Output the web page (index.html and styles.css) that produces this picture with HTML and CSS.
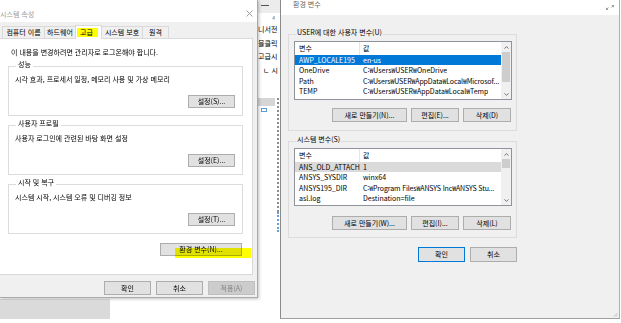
FILE: index.html
```html
<!DOCTYPE html>
<html lang="ko">
<head>
<meta charset="utf-8">
<link rel="stylesheet" href="styles.css">
</head>
<body>
<div class="screen">
  <div class="left-col">
    <div class="ldlg">
      <div class="ltitle">
        <span class="ttext">시스템 속성</span>
        <svg class="close" width="7" height="7" viewBox="0 0 7 7"><path d="M0.5 0.5 L6.5 6.5 M6.5 0.5 L0.5 6.5" stroke="#8a8a8a" stroke-width="0.8" fill="none"/></svg>
      </div>
      <div class="tabs">
        <div class="tab t1">컴퓨터 이름</div>
        <div class="tab t2">하드웨어</div>
        <div class="tab sel"><span class="hl">고급</span></div>
        <div class="tab t4">시스템 보호</div>
        <div class="tab t5">원격</div>
      </div>
      <div class="lpanel">
        <p class="note">이 내용을 변경하려면 관리자로 로그온해야 합니다.</p>
        <div class="group lgroup">
          <div class="glabel">성능</div>
          <p class="gtext">시각 효과, 프로세서 일정, 메모리 사용 및 가상 메모리</p>
          <div class="brow"><button class="btn bset">설정(S)...</button></div>
        </div>
        <div class="group lgroup">
          <div class="glabel">사용자 프로필</div>
          <p class="gtext">사용자 로그인에 관련된 바탕 화면 설정</p>
          <div class="brow"><button class="btn bset">설정(E)...</button></div>
        </div>
        <div class="group lgroup">
          <div class="glabel">시작 및 복구</div>
          <p class="gtext">시스템 시작, 시스템 오류 및 디버깅 정보</p>
          <div class="brow"><button class="btn bset">설정(T)...</button></div>
        </div>
        <div class="brow envrow"><button class="btn benv">환경 변수(N)...<span class="marker"></span></button></div>
      </div>
      <div class="lfoot">
        <button class="btn bf">확인</button>
        <button class="btn bf">취소</button>
        <button class="btn bf dis">적용(A)</button>
      </div>
    </div>
    <div class="under"></div>
  </div>

  <div class="mid">
    <div class="ruler"><span class="dash"></span></div>
    <div class="ruler2">4</div>
    <div class="doc">
      <div class="dl">니서전</div>
      <div class="dl">블클릭</div>
      <div class="dl">고급시</div>
      <div class="dl d4">ㄴ 시</div>
    </div>
    <div class="mid-low">
      <div class="mid-left">
        <div class="gbar"></div>
        <div class="bluebox"></div>
      </div>
      <div class="mid-rule">
        <div class="dots"></div>
        <div class="bdots"></div>
      </div>
    </div>
  </div>

  <div class="rdlg">
    <div class="rtitle">
      <span class="rttext">환경 변수</span>
      <svg class="rsize" width="8" height="5" viewBox="0 0 8 5"><path d="M0.5 4.5 L2.5 2.5 M0.5 2.8 V4.5 H2.2 M7.5 0.5 L5.5 2.5 M7.5 2.2 V0.5 H5.8" stroke="#777" stroke-width="0.7" fill="none"/></svg>
    </div>

    <div class="group rgroup g1">
      <div class="glabel rlabel">USER에 대한 사용자 변수(U)</div>
      <div class="lb lb1">
        <div class="lb-body">
          <div class="lrow head"><span class="c1 hc">변수</span><span class="c2">값</span></div>
          <div class="lrow selblue"><span class="c1">AWP_LOCALE195</span><span class="c2">en-us</span></div>
          <div class="lrow"><span class="c1">OneDrive</span><span class="c2">C:₩Users₩USER₩OneDrive</span></div>
          <div class="lrow"><span class="c1">Path</span><span class="c2 tight">C:₩Users₩USER₩AppData₩Local₩Microsof...</span></div>
          <div class="lrow"><span class="c1">TEMP</span><span class="c2">C:₩Users₩USER₩AppData₩Local₩Temp</span></div>
        </div>
        <div class="sb">
          <div class="arr"><svg width="5" height="3" viewBox="0 0 5 3"><path d="M0.5 2.6 L2.5 0.6 L4.5 2.6" stroke="#555" stroke-width="0.8" fill="none"/></svg></div>
          <div class="thumb th1"></div>
          <div class="sbfill"></div>
          <div class="arr"><svg width="5" height="3" viewBox="0 0 5 3"><path d="M0.5 0.4 L2.5 2.4 L4.5 0.4" stroke="#555" stroke-width="0.8" fill="none"/></svg></div>
        </div>
      </div>
      <div class="brow rbrow">
        <button class="btn rb wide">새로 만들기(N)...</button>
        <button class="btn rb">편집(E)...</button>
        <button class="btn rb">삭제(D)</button>
      </div>
    </div>

    <div class="group rgroup g2">
      <div class="glabel rlabel">시스템 변수(S)</div>
      <div class="lb lb2">
        <div class="lb-body">
          <div class="lrow head"><span class="c1 hc">변수</span><span class="c2">값</span></div>
          <div class="lrow selgrey"><span class="c1">ANS_OLD_ATTACH</span><span class="c2">1</span></div>
          <div class="lrow"><span class="c1">ANSYS_SYSDIR</span><span class="c2">winx64</span></div>
          <div class="lrow"><span class="c1">ANSYS195_DIR</span><span class="c2 tight">C:₩Program Files₩ANSYS Inc₩ANSYS Stu...</span></div>
          <div class="lrow"><span class="c1">asl.log</span><span class="c2">Destination=file</span></div>
        </div>
        <div class="sb">
          <div class="arr"><svg width="5" height="3" viewBox="0 0 5 3"><path d="M0.5 2.6 L2.5 0.6 L4.5 2.6" stroke="#555" stroke-width="0.8" fill="none"/></svg></div>
          <div class="thumb th2"></div>
          <div class="sbfill"></div>
          <div class="arr"><svg width="5" height="3" viewBox="0 0 5 3"><path d="M0.5 0.4 L2.5 2.4 L4.5 0.4" stroke="#555" stroke-width="0.8" fill="none"/></svg></div>
        </div>
      </div>
      <div class="brow rbrow r2">
        <button class="btn rb wide">새로 만들기(W)...</button>
        <button class="btn rb">편집(I)...</button>
        <button class="btn rb">삭제(L)</button>
      </div>
    </div>

    <div class="rfoot">
      <button class="btn rf focus">확인</button>
      <button class="btn rf">취소</button>
    </div>
    <div class="rfill"></div>
    <svg class="grip" width="5" height="5" viewBox="0 0 5 5"><path d="M4.5 1 L1 4.5 M4.5 3 L3 4.5" stroke="#aaa" stroke-width="0.7"/></svg>
  </div>
</div>
</body>
</html>
```

FILE: styles.css
```css
* { box-sizing: border-box; }
html, body { margin: 0; padding: 0; background: #fff; }
body {
  font-family: "Noto Sans CJK KR", "Noto Sans", sans-serif;
  font-size: 7px;
  line-height: 10px;
  color: #000;
}
p { margin: 0; }
.screen { display: flex; width: 621px; height: 323px; overflow: hidden; }

/* left dialog */
.left-col { width: 258px; display: flex; flex-direction: column; position: relative; z-index: 1; }
.ldlg {
  width: 258px; height: 298px;
  background: #f0f0f0;
  border-right: 1px solid #a9a9a9;
  border-bottom: 1px solid #a9a9a9;
  box-shadow: 1px 1px 3px rgba(0,0,0,0.25);
  display: flex; flex-direction: column;
}
.ltitle {
  height: 22px; background: #fff;
  display: flex; align-items: center; justify-content: space-between;
  padding: 5px 4px 0 0;
}
.ttext { color: #9a9a9a; font-size: 7px; }
.tabs { display: flex; align-items: flex-end; height: 13px; margin-top: 3px; padding-left: 2px; position: relative; z-index: 2; }
.tab {
  height: 12px; line-height: 11px; text-align: center;
  border: 1px solid #d9d9d9; border-bottom: none;
  background: #f0f0f0; margin-left: -1px;
}
.t1 { width: 43px; margin-left: 0; }
.t2 { width: 32px; }
.t4 { width: 42px; }
.t5 { width: 27px; }
.tab.sel { width: 27px; height: 14px; margin-bottom: -1px; background: #fff; display: flex; align-items: flex-start; padding: 2px 0 0 1px; }
.hl { display: block; width: 21px; height: 9px; line-height: 9px; background: #ffff00; text-align: center; padding-right: 2px; }

.lpanel {
  width: 253px; height: 237px;
  background: #fff;
  border: 1px solid #d9d9d9; border-left: none;
  padding-top: 8px;
  display: flex; flex-direction: column;
}
.note { margin-left: 11px; }
.group { border: 1px solid #dcdcdc; }
.lgroup { margin: 9px 9px 0 8px; padding: 0 7px 7px 6px; }
.glabel { width: fit-content; margin: -8px 0 0 1px; padding: 0 2px; background: #fff; line-height: 10px; }
.gtext { margin-top: 5px; }
.brow { display: flex; justify-content: flex-end; margin-top: 11px; }

.btn {
  font: inherit; font-size: 7px; line-height: 1; color: #000;
  background: #e1e1e1; border: 1px solid #adadad;
  padding: 0; margin: 0;
  display: flex; align-items: center; justify-content: center;
}
.bset { width: 47px; height: 13px; }
.envrow { margin-top: 9px; margin-right: 10px; }
.benv { width: 82px; height: 13px; position: relative; }
.marker {
  position: absolute; left: 14px; top: 4px; width: 76px; height: 10px;
  background: #ffff00; mix-blend-mode: multiply;
}
.lfoot { display: flex; justify-content: flex-end; gap: 5px; margin-top: 6px; padding-right: 2px; }
.bf { width: 47px; height: 14px; }
.bf.dis { background: #cccccc; border-color: #bfbfbf; color: #838383; }
.under { width: 110px; height: 20px; margin-top: 1px; background: #dadada; border-top: 1px solid #c6c6c6; }

/* middle background window */
.mid { width: 22px; display: flex; flex-direction: column; background: #fff; }
.ruler { height: 13px; background: #ececec; padding: 5px 0 0 3px; }
.dash { display: block; width: 8px; height: 1px; background: #555; }
.ruler2 { height: 9px; font-size: 5px; line-height: 9px; text-align: right; color: #666; padding-right: 5px; }
.doc { margin-top: 1px; }
.dl { font-size: 7px; line-height: 13.5px; white-space: nowrap; }
.dl.d4 { padding-left: 5px; }
.mid-low { display: flex; margin-top: 21px; }
.mid-left { width: 19px; }
.gbar { height: 8px; background: #d6d6d6; width: 17px; }
.bluebox { width: 6px; height: 4px; margin: 2px 0 0 3px; border: 1px solid #5b9bd5; }
.mid-rule { width: 3px; display: flex; flex-direction: column; }
.dots { height: 114px; border-left: 2px dotted #8c8c8c; }
.bdots { height: 20px; border-left: 2px dotted #6a9fd4; }

/* right dialog */
.rdlg {
  width: 340px; height: 319px;
  background: #f0f0f0;
  border: 1px solid #8a8a8a; border-top: none; border-right-color: #b0b0b0; border-bottom-color: #a0a0a0;
  display: flex; flex-direction: column;
  position: relative;
}
.rtitle {
  height: 15px; background: #fff; flex: none;
  display: flex; justify-content: space-between; align-items: flex-start;
  overflow: hidden;
}
.rttext { margin: -1px 0 0 12px; color: #666; }
.rsize { margin: 5px 5px 0 0; }
.rgroup { width: 229px; margin-left: 7px; padding: 0 4px 8px 5px; }
.g1 { margin-top: 19px; }
.g2 { margin-top: 10px; padding-bottom: 7px; }
.rlabel { background: #f0f0f0; margin-left: 2px; padding: 0 1px; }
.lb { display: flex; margin-top: 4px; background: #fff; border: 1px solid #8f949b; }
.lb1 { height: 59px; }
.lb2 { height: 58px; }
.lb-body { width: 206px; overflow: hidden; }
.lrow { display: flex; height: 10.3px; line-height: 10.3px; white-space: nowrap; }
.lrow.head { height: 13px; line-height: 13px; }
.c1 { width: 65px; padding-left: 4px; flex: none; overflow: hidden; }
.c1.hc { border-right: 1px solid #e5e5e5; }
.c2 { padding-left: 3px; overflow: hidden; }
.c2.tight { letter-spacing: -0.12px; }
.selblue { background: #0078d7; color: #fff; }
.selgrey { background: #dadada; }
.sb { width: 10px; background: #f0f0f0; display: flex; flex-direction: column; align-items: center; }
.arr { height: 10px; display: flex; align-items: center; justify-content: center; flex: none; }
.thumb { width: 8px; background: #cdcdcd; flex: none; }
.th1 { height: 30px; }
.th2 { height: 9px; }
.sbfill { flex: 1; }
.rbrow { gap: 4px; margin-top: 8px; padding-right: 1px; }
.rbrow.r2 { margin-top: 10px; }
.rb { width: 48px; height: 14px; }
.rb.wide { width: 75px; }
.rfoot { width: 229px; margin: 9px 0 0 7px; display: flex; justify-content: flex-end; gap: 5px; }
.rf { width: 47px; height: 15px; }
.rf.focus { border-color: #0078d7; }
.rfill { flex: 1; }
.grip { position: absolute; right: 1px; bottom: 1px; }
```
